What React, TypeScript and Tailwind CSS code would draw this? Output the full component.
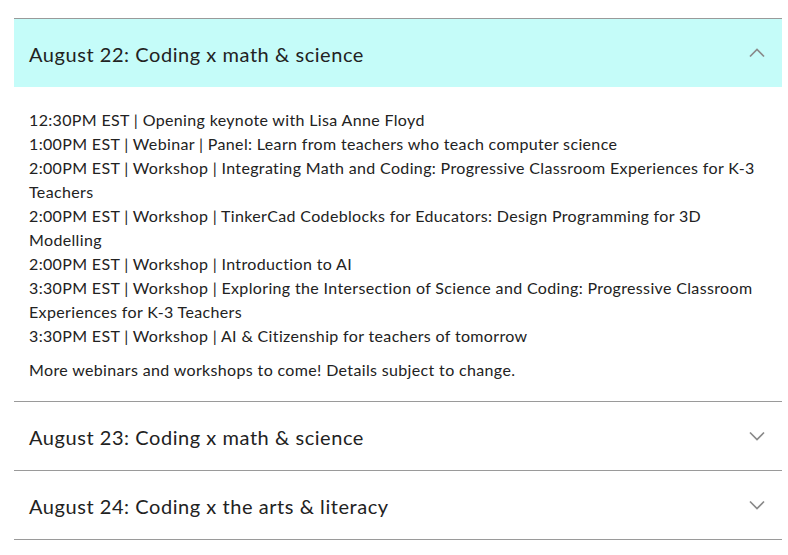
import React, { useState } from 'react';

interface Day {
  title: string;
  items: string[];
}

const DAYS: Day[] = [
  {
    title: 'August 22: Coding x math & science',
    items: [
      '12:30PM EST | Opening keynote with Lisa Anne Floyd',
      '1:00PM EST | Webinar | Panel: Learn from teachers who teach computer science',
      '2:00PM EST | Workshop | Integrating Math and Coding: Progressive Classroom Experiences for K-3 Teachers',
      '2:00PM EST | Workshop | TinkerCad Codeblocks for Educators: Design Programming for 3D Modelling',
      '2:00PM EST | Workshop | Introduction to AI',
      '3:30PM EST | Workshop | Exploring the Intersection of Science and Coding: Progressive Classroom Experiences for K-3 Teachers',
      '3:30PM EST | Workshop | AI & Citizenship for teachers of tomorrow',
    ],
  },
  { title: 'August 23: Coding x math & science', items: [] },
  { title: 'August 24: Coding x the arts & literacy', items: [] },
];

const Chevron = ({ up }: { up: boolean }) => (
  <svg width="16" height="10" viewBox="0 0 16 10" fill="none" className="shrink-0">
    {up ? (
      <polyline points="1,8.5 8,1.5 15,8.5" stroke="#8a8a8a" strokeWidth="1.7" />
    ) : (
      <polyline points="1,1.5 8,8.5 15,1.5" stroke="#8a8a8a" strokeWidth="1.7" />
    )}
  </svg>
);

export default function App() {
  const [open, setOpen] = useState(0);

  return (
    <div className="bg-white h-screen overflow-hidden pt-[18px] pl-[14px] pr-[6px] text-[#222] font-['Lato','Liberation_Sans',sans-serif]">
      <div className="border-t border-[#9a9a9a]">
        {DAYS.map((day, i) => {
          const isOpen = open === i;
          return (
            <div key={day.title} className="border-b border-[#9a9a9a]">
              <button
                onClick={() => setOpen(isOpen ? -1 : i)}
                className={`w-full h-[68px] flex items-center justify-between pl-[15px] pr-[17px] text-left ${isOpen ? 'bg-[#c5fcf9]' : 'bg-white'}`}
              >
                <span className="text-[20px] tracking-[0.55px] pt-[1px]">{day.title}</span>
                <Chevron up={isOpen} />
              </button>
              {isOpen && (
                <div className="pt-[21px] pb-[19px] pl-[15px] pr-[15px] text-[16px] leading-[24px] tracking-[0.35px]">
                  <ul>
                    {day.items.map((item, j) => (
                      <li key={j}>{item}</li>
                    ))}
                  </ul>
                  <p className="mt-[10px]">More webinars and workshops to come! Details subject to change.</p>
                </div>
              )}
            </div>
          );
        })}
      </div>
    </div>
  );
}
